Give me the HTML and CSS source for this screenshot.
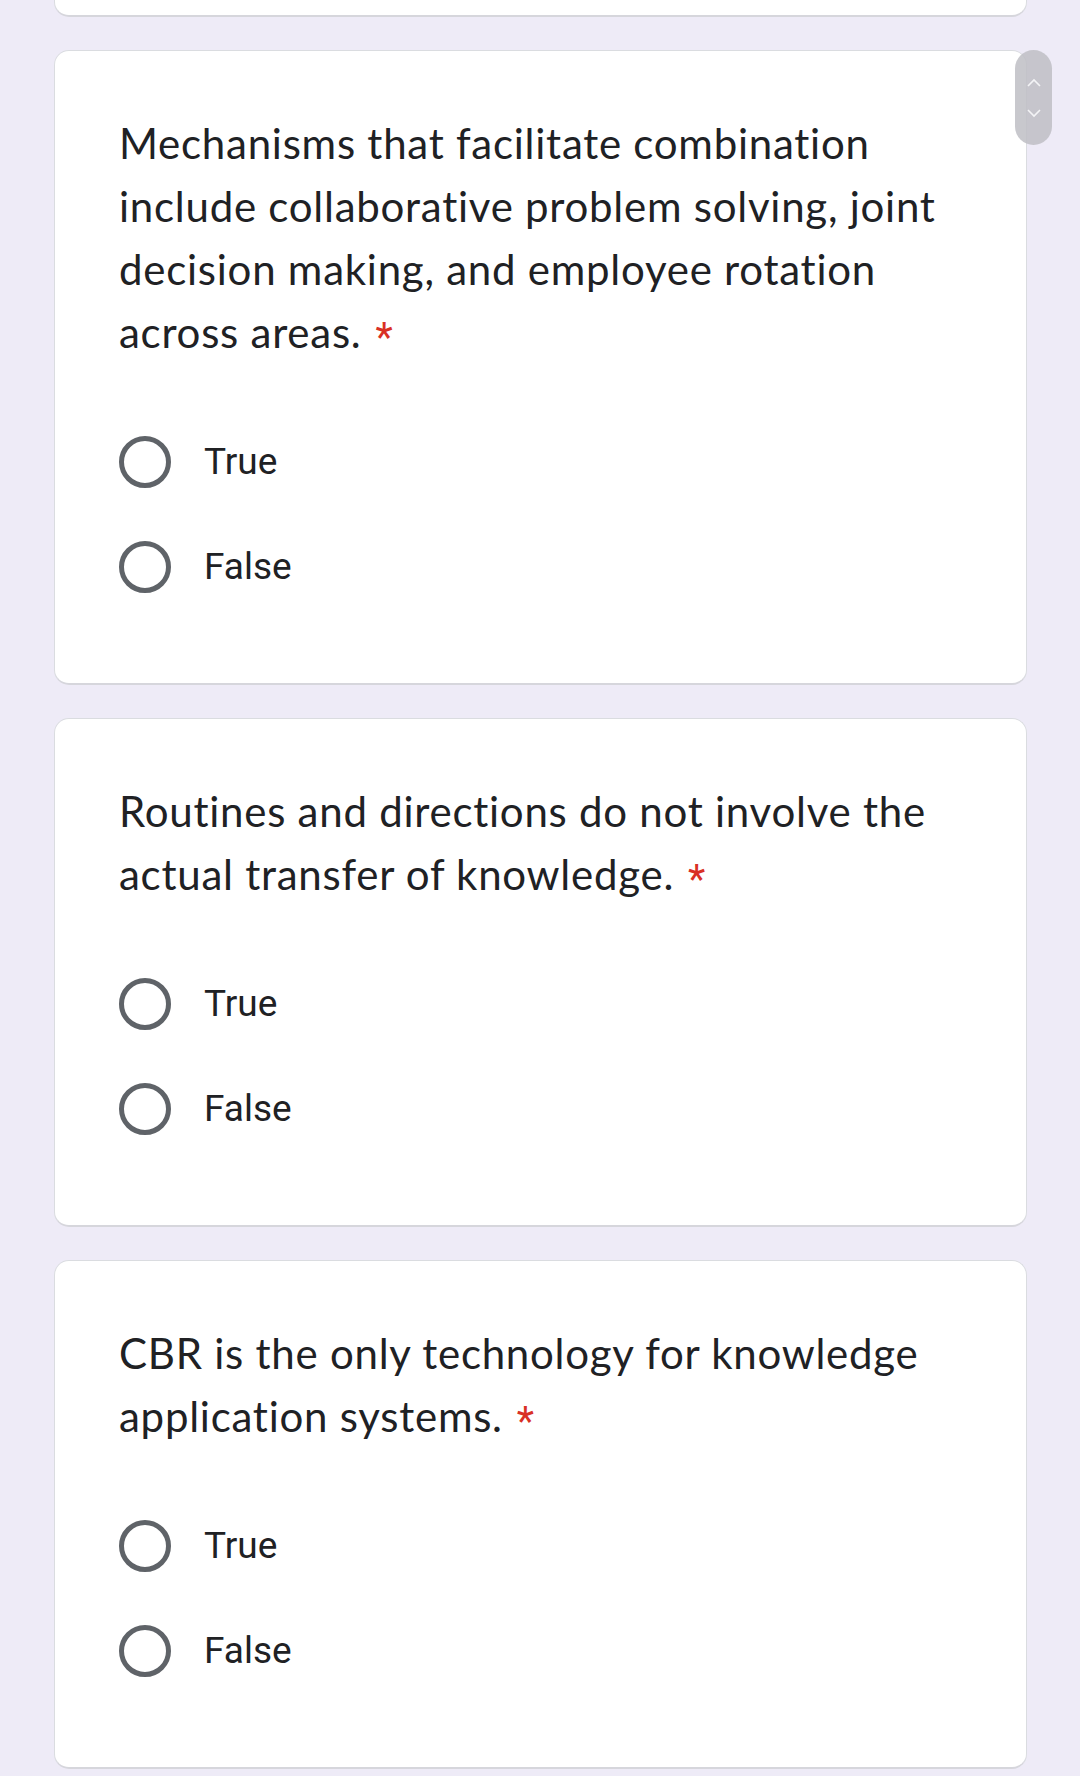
FILE: index.html
```html
<!DOCTYPE html>
<html>
<head>
<meta charset="utf-8">
<link rel="stylesheet" href="styles.css">
</head>
<body>
<main class="form">
  <div class="card card-stub"></div>

  <section class="card">
    <div class="question">Mechanisms that facilitate combination<br>include collaborative problem solving, joint<br>decision making, and employee rotation<br>across areas.<span class="req">*</span></div>
    <div class="options">
      <label class="option"><span class="radio"></span><span class="opt-text">True</span></label>
      <label class="option"><span class="radio"></span><span class="opt-text">False</span></label>
    </div>
  </section>

  <section class="card">
    <div class="question">Routines and directions do not involve the<br>actual transfer of knowledge.<span class="req">*</span></div>
    <div class="options">
      <label class="option"><span class="radio"></span><span class="opt-text">True</span></label>
      <label class="option"><span class="radio"></span><span class="opt-text">False</span></label>
    </div>
  </section>

  <section class="card">
    <div class="question">CBR is the only technology for knowledge<br>application systems.<span class="req">*</span></div>
    <div class="options">
      <label class="option"><span class="radio"></span><span class="opt-text">True</span></label>
      <label class="option"><span class="radio"></span><span class="opt-text">False</span></label>
    </div>
  </section>
</main>

<div class="scroll-thumb">
  <svg width="16" height="10" viewBox="0 0 16 10"><path d="M2 8 L8 2 L14 8" fill="none" stroke="#f4f4f6" stroke-width="1.6"/></svg>
  <svg width="16" height="10" viewBox="0 0 16 10"><path d="M2 2 L8 8 L14 2" fill="none" stroke="#f4f4f6" stroke-width="1.6"/></svg>
</div>
</body>
</html>
```

FILE: styles.css
```css
html, body {
  margin: 0;
  padding: 0;
  background: #eeebf7;
}

body {
  width: 1080px;
  height: 1776px;
  overflow: hidden;
  position: relative;
}

.form {
  display: flex;
  flex-direction: column;
  gap: 33px;
  padding: 0 53px 0 54px;
}

.card {
  background: #ffffff;
  border: 1px solid #dadce0;
  border-bottom: 2px solid #d6d6dc;
  border-radius: 15px;
  padding: 61px 66px 64px 64px;
}

.card-stub {
  height: 15px;
  padding: 0;
  border-top: none;
  border-radius: 0 0 15px 15px;
}

.question {
  font-family: "Lato", "Inter", sans-serif;
  font-size: 42px;
  line-height: 63px;
  letter-spacing: 0.75px;
  font-variant-ligatures: none;
  color: #202124;
  margin-bottom: 45px;
}

.req {
  font-family: "Roboto", sans-serif;
  color: #d93025;
  font-size: 40px;
  line-height: 0;
  margin-left: 14px;
  position: relative;
  top: 3px;
}

.options {
  display: flex;
  flex-direction: column;
}

.option {
  display: flex;
  align-items: center;
  gap: 33px;
  height: 105px;
}

.radio {
  width: 52px;
  height: 52px;
  box-sizing: border-box;
  border: 5px solid #5f6368;
  border-radius: 50%;
  flex: none;
}

.opt-text {
  font-family: "Roboto", sans-serif;
  font-size: 37px;
  color: #202124;
}

.scroll-thumb {
  position: absolute;
  left: 1015px;
  top: 50px;
  width: 37px;
  height: 95px;
  border-radius: 19px;
  background: rgba(190, 190, 196, 0.85);
  display: flex;
  flex-direction: column;
  align-items: center;
  justify-content: center;
  gap: 20px;
}
```
